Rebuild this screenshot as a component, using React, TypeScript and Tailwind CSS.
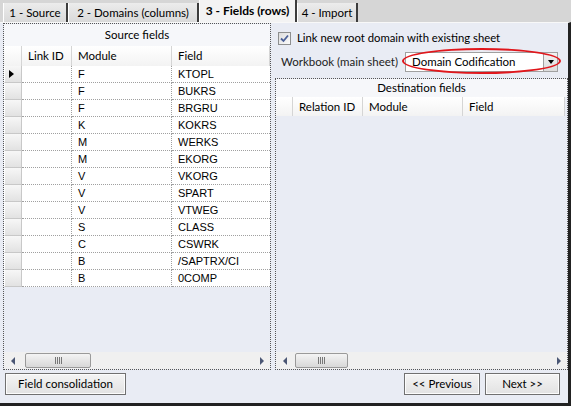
import React from 'react';

const sourceRows: [string, string][] = [
  ['F', 'KTOPL'],
  ['F', 'BUKRS'],
  ['F', 'BRGRU'],
  ['K', 'KOKRS'],
  ['M', 'WERKS'],
  ['M', 'EKORG'],
  ['V', 'VKORG'],
  ['V', 'SPART'],
  ['V', 'VTWEG'],
  ['S', 'CLASS'],
  ['C', 'CSWRK'],
  ['B', '/SAPTRX/CI'],
  ['B', '0COMP'],
];

const ui = { fontFamily: 'Lato, "Open Sans", sans-serif' };
const cell = { fontFamily: '"Liberation Sans", Arial, sans-serif' };

function Tab({ label, active, w }: { label: string; active?: boolean; w: string }) {
  return (
    <div
      className={`${w} flex items-center justify-center whitespace-nowrap border-l border-white border-r-2 border-r-[#3c3c3c] ${
        active
          ? 'h-[22px] bg-[#f3f3f3] font-bold text-[12px] pb-[1px]'
          : 'h-[19px] bg-gradient-to-b from-[#ececec] to-[#d9d9d9] text-[11.5px]'
      } text-black leading-none`}
      style={ui}
    >
      {label}
    </div>
  );
}

function ScrollBar({ thumbLeft, thumbW }: { thumbLeft: string; thumbW: string }) {
  return (
    <div className="h-[17px] bg-[#f0f0f0] flex items-center shrink-0">
      <div className="w-[17px] flex justify-center">
        <div className="w-0 h-0 border-y-[4px] border-y-transparent border-r-[4px] border-r-[#4a5674]" />
      </div>
      <div className={`${thumbLeft} ${thumbW} h-[15px] border border-[#9a9a9a] rounded-[2px] bg-gradient-to-b from-[#f4f4f4] to-[#d8d8d8] flex items-center justify-center gap-[1px]`}>
        <div className="w-[1px] h-[7px] bg-[#777]" />
        <div className="w-[1px] h-[7px] bg-[#777]" />
        <div className="w-[1px] h-[7px] bg-[#777]" />
        <div className="w-[1px] h-[7px] bg-[#777]" />
      </div>
      <div className="flex-1" />
      <div className="w-[17px] flex justify-center">
        <div className="w-0 h-0 border-y-[4px] border-y-transparent border-l-[4px] border-l-[#4a5674]" />
      </div>
    </div>
  );
}

function HeaderCell({ label, w }: { label: string; w: string }) {
  return (
    <div
      className={`${w} h-full flex items-center pl-[6px] border-r border-[#d5d5d5] bg-gradient-to-b from-white to-[#f3f3f3] text-[11.5px] text-black shrink-0 whitespace-nowrap`}
      style={ui}
    >
      {label}
    </div>
  );
}

function RowHeader({ current }: { current?: boolean }) {
  return (
    <div className="w-[18px] h-full shrink-0 bg-gradient-to-b from-[#f7f7f7] to-[#e2e2e2] border-r border-b border-[#c8c8c8] border-l border-l-white flex items-center pl-[4px]">
      {current && (
        <div className="w-0 h-0 border-y-[4px] border-y-transparent border-l-[5px] border-l-black" />
      )}
    </div>
  );
}

function Button({ label, w }: { label: string; w: string }) {
  return (
    <div
      className={`${w} h-[22px] border border-[#707070] bg-gradient-to-b from-[#f4f4f4] to-[#e2e2e2] flex items-center justify-center text-[11.5px] text-black shadow-[inset_0_0_0_1px_#fcfcfc] whitespace-nowrap`}
      style={ui}
    >
      {label}
    </div>
  );
}

export default function App() {
  return (
    <div className="w-[571px] h-[406px] flex flex-col bg-[#d6d6d6] overflow-hidden">
      {/* tab strip */}
      <div className="h-[22px] flex items-end pl-[3px] shrink-0">
        <Tab label="1 - Source" w="w-[65px]" />
        <Tab label="2 - Domains (columns)" w="w-[131px]" />
        <Tab label="3 - Fields (rows)" w="w-[98px]" active />
        <Tab label="4 - Import" w="w-[61px]" />
      </div>

      {/* tab page */}
      <div className="flex-1 flex flex-col bg-[#e9ecf4] border-t border-[#f8f8f8] border-r-[3px] border-r-[#222] border-b-[3px] border-b-[#222]">
        <div className="flex pl-[3px] h-[347px] gap-[4px]">
          {/* Source fields */}
          <div className="w-[268px] h-full border border-dotted border-[#555] flex flex-col">
            <div className="h-[22px] shrink-0 bg-[#f6f7fa] flex items-center justify-center text-[11.5px] text-black" style={ui}>
              Source fields
            </div>
            <div className="h-[20px] flex shrink-0">
              <div className="w-[18px] h-full bg-gradient-to-b from-white to-[#f3f3f3] border-r border-[#d5d5d5]" />
              <HeaderCell label="Link ID" w="w-[50px]" />
              <HeaderCell label="Module" w="w-[100px]" />
              <HeaderCell label="Field" w="w-[98px]" />
            </div>
            {sourceRows.map(([m, f], i) => (
              <div key={i} className="h-[17px] flex shrink-0">
                <RowHeader current={i === 0} />
                <div className="w-[50px] h-full bg-white border-r border-b border-dotted border-[#a0a0a0]" />
                <div className="w-[100px] h-full bg-white border-r border-b border-dotted border-[#a0a0a0] pl-[6px] flex items-center text-[11px] text-black" style={cell}>
                  {m}
                </div>
                <div className="flex-1 h-full bg-white border-b border-dotted border-[#a0a0a0] pl-[6px] flex items-center text-[11px] text-black" style={cell}>
                  {f}
                </div>
              </div>
            ))}
            <div className="flex-1" />
            <ScrollBar thumbLeft="ml-[4px]" thumbW="w-[66px]" />
          </div>

          {/* right side */}
          <div className="w-[293px] h-full flex flex-col">
            <div className="h-[25px] flex items-center pt-[5px] pl-[3px] gap-[6px] shrink-0">
              <div className="w-[13px] h-[13px] border border-[#8e8f8f] bg-gradient-to-br from-[#dcdcdc] to-[#fbfbfb] flex items-center justify-center">
                <svg width="9" height="9" viewBox="0 0 9 9">
                  <path d="M1 4.5 L3.5 7 L8 1.5" fill="none" stroke="#4a5f97" strokeWidth="1.8" />
                </svg>
              </div>
              <span className="text-[11.3px] text-black whitespace-nowrap" style={ui}>
                Link new root domain with existing sheet
              </span>
            </div>
            <div className="h-[27px] flex items-center pl-[6px] shrink-0 relative">
              <span className="w-[124px] text-[11.5px] text-[#222] whitespace-nowrap" style={ui}>
                Workbook (main sheet)
              </span>
              <div className="w-[153px] h-[20px] bg-white border border-[#a0a0a0] flex items-center">
                <span className="flex-1 pl-[6px] text-[11.5px] text-black whitespace-nowrap" style={ui}>
                  Domain Codification
                </span>
                <div className="w-[14px] h-full border-l border-[#a0a0a0] bg-gradient-to-b from-[#f2f2f2] to-[#dcdcdc] flex items-center justify-center">
                  <div className="w-0 h-0 border-x-[3px] border-x-transparent border-t-[4px] border-t-black" />
                </div>
              </div>
              <div className="absolute left-[127px] top-[0px] w-[159px] h-[26px] rounded-[50%] border-[2px] border-[#e0161b]" />
            </div>
            <div className="h-[3px] shrink-0" />
            {/* Destination fields */}
            <div className="flex-1 border border-dotted border-[#555] flex flex-col">
              <div className="h-[18px] shrink-0 bg-[#f6f7fa] flex items-center justify-center text-[11.5px] text-black" style={ui}>
                Destination fields
              </div>
              <div className="h-[19px] flex shrink-0">
                <div className="w-[17px] h-full bg-gradient-to-b from-white to-[#f3f3f3] border-r border-[#d5d5d5]" />
                <HeaderCell label="Relation ID" w="w-[70px]" />
                <HeaderCell label="Module" w="w-[100px]" />
                <HeaderCell label="Field" w="w-[102px]" />
              </div>
              <div className="flex-1" />
              <ScrollBar thumbLeft="ml-[2px]" thumbW="w-[53px]" />
            </div>
          </div>
        </div>

        {/* buttons */}
        <div className="flex items-start pt-[3px] pl-[5px] pr-[8px]">
          <Button label="Field consolidation" w="w-[121px]" />
          <div className="flex-1" />
          <Button label="<< Previous" w="w-[76px]" />
          <div className="w-[5px]" />
          <Button label="Next >>" w="w-[75px]" />
        </div>
      </div>
    </div>
  );
}
